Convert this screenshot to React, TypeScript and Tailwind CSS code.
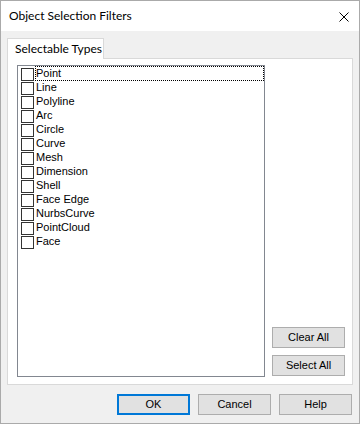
import React from "react";

const types = [
  "Point",
  "Line",
  "Polyline",
  "Arc",
  "Circle",
  "Curve",
  "Mesh",
  "Dimension",
  "Shell",
  "Face Edge",
  "NurbsCurve",
  "PointCloud",
  "Face",
];

function WinButton({ label, primary }: { label: string; primary?: boolean }) {
  return (
    <button
      className={`w-[73px] h-[21px] flex items-center justify-center bg-[#e1e1e1] text-[11px] text-black ${
        primary ? "border-2 border-[#0078d7]" : "border border-[#adadad]"
      }`}
    >
      {label}
    </button>
  );
}

export default function App() {
  return (
    <div
      className="w-[360px] h-[424px] border border-[#aaaaaa] bg-[#f0f0f0] flex flex-col overflow-hidden"
      style={{ fontFamily: '"Liberation Sans", Arial, sans-serif' }}
    >
      {/* title bar */}
      <div className="h-[30px] bg-white flex items-center justify-between pl-[8px] pr-[10px]">
        <span
          className="text-[12px] text-black whitespace-nowrap"
          style={{ fontFamily: 'Lato, "Noto Sans", sans-serif' }}
        >
          Object Selection Filters
        </span>
        <svg width="10" height="10" viewBox="0 0 10 10" className="mt-[1px]">
          <path d="M0.5 0.5 L9.5 9.5 M9.5 0.5 L0.5 9.5" stroke="#000" strokeWidth="1" />
        </svg>
      </div>

      <div className="flex-1 flex flex-col px-[6px] pt-[7px]">
        {/* tab header */}
        <div className="h-[20px] flex">
          <div
            className="w-[97px] h-[21px] bg-white border border-b-0 border-[#d9d9d9] pl-[7px] text-[12px] leading-[20px] text-black whitespace-nowrap relative z-10"
            style={{ fontFamily: 'Lato, "Noto Sans", sans-serif' }}
          >
            Selectable Types
          </div>
        </div>

        {/* tab panel */}
        <div className="h-[327px] bg-white border border-[#d9d9d9] flex pl-[9px] pr-[4px] pt-[6px] pb-[7px] gap-[7px]">
          <div className="w-[248px] h-[312px] border border-[#828790] bg-white pt-[1px]">
            {types.map((t, i) => (
              <div key={t} className="h-[14px] flex items-start">
                <div className="mt-[1px] ml-[3px] w-[13px] h-[13px] border border-[#333333] bg-white shrink-0" />
                <span
                  className={`ml-[1px] flex-1 h-[15px] -mt-[1px] pl-[1px] text-[11px] leading-[15px] text-black whitespace-nowrap ${
                    i === 0 ? "outline outline-1 outline-dotted outline-black -outline-offset-1" : ""
                  }`}
                >
                  {t}
                </span>
              </div>
            ))}
          </div>
          <div className="flex-1 flex flex-col justify-end gap-[7px] pb-[1px]">
            <WinButton label="Clear All" />
            <WinButton label="Select All" />
          </div>
        </div>

        {/* footer */}
        <div className="mt-[9px] flex justify-end gap-[8px] pr-[1px]">
          <WinButton label="OK" primary />
          <WinButton label="Cancel" />
          <WinButton label="Help" />
        </div>
      </div>
    </div>
  );
}
